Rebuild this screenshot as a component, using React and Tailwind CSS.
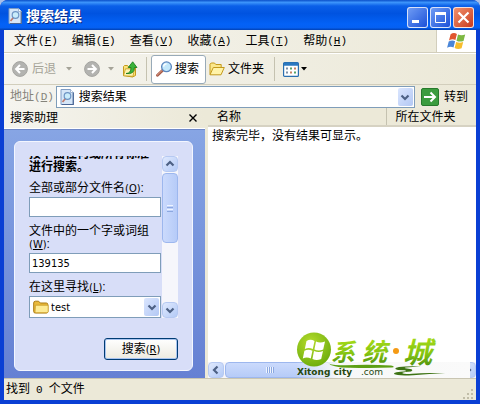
import React, { useState } from 'react';

const MENUS = [
  { label: '文件', accel: 'F' },
  { label: '编辑', accel: 'E' },
  { label: '查看', accel: 'V' },
  { label: '收藏', accel: 'A' },
  { label: '工具', accel: 'T' },
  { label: '帮助', accel: 'H' },
];

const Accel = ({ letter }) => (
  <span className="font-['Liberation_Mono',monospace] text-[11px]">
    (<u>{letter}</u>)
  </span>
);

const PanelAccel = ({ letter }) => (
  <span className="font-['DejaVu_Sans_Condensed','DejaVu_Sans',sans-serif] text-[11px]">
    (<u>{letter}</u>)
  </span>
);

const SearchPageIcon = ({ className }) => (
  <svg viewBox="0 0 14 16" className={className} aria-hidden="true">
    <path d="M1 .5h9.500l3 3v12H1z" fill="#d5e6f8" stroke="#7f9cc4" />
    <path d="M13.2 3.5v12H2" fill="none" stroke="#4a6594" strokeWidth="1.2" />
    <path d="M10.5.5v3h3" fill="#fff" stroke="#7f9cc4" strokeWidth=".7" />
    <path d="M5.5 9.5 2.5 13" stroke="#c07a6c" strokeWidth="1.8" />
    <circle cx="7.5" cy="7" r="3.3" fill="#c9ecfb" stroke="#6e95c4" strokeWidth="1.2" />
  </svg>
);

const FolderIcon = ({ className }) => (
  <svg viewBox="0 0 16 14" className={className} aria-hidden="true">
    <path d="M.7 3Q.7 1.2 2.4 1.2h3.2L7.3 3h6q1.5 0 1.5 1.5v7.2q0 1.3-1.4 1.3H2.2Q.7 13 .7 11.6z" fill="#e9b93a" stroke="#a97a12" />
    <path d="M2.4 5.2h12.8v6.3q0 1.2-1.3 1.2H3.2q-1.2 0-1.2-1.2z" fill="#fdeb94" stroke="#c99a26" strokeWidth=".8" />
  </svg>
);

const OpenFolderIcon = () => (
  <svg viewBox="0 0 16 14" className="h-3.5 w-4" aria-hidden="true">
    <path d="M1 12.5V2.2L2.2 1h3.3l1.3 1.5h5.4v3" fill="#fbe78a" stroke="#c49a1c" />
    <path d="m1 12.8 3.3-7.3h11L12 12.8z" fill="#fff3a8" stroke="#c49a1c" strokeLinejoin="round" />
  </svg>
);

const UpFolderIcon = () => (
  <svg viewBox="0 0 16 17" className="h-[17px] w-4" aria-hidden="true">
    <path d="M1.5 14.5v-9l1-1h3l1.2 1.5h6.8v8.5l-3 1.5z" fill="#fbe27a" stroke="#c49a1c" />
    <path d="m1.5 14.8 2-7H8l4.5-.5-1.5 8z" fill="#fff4b0" stroke="#c49a1c" strokeWidth=".8" />
    <path d="M4 12.5q5 0 5-6H6.2L10.7.8l4.3 5.7h-2.6q0 7.3-8.4 6z" fill="#3bb33a" stroke="#15781c" strokeWidth=".8" />
  </svg>
);

const MagnifierIcon = () => (
  <svg viewBox="0 0 17 16" className="h-4 w-[17px]" aria-hidden="true">
    <path d="m7.500 8.500-6 5.800" stroke="#a65a48" strokeWidth="2.8" strokeLinecap="round" />
    <path d="m7.300 8.200-6 5.800" stroke="#dda08a" strokeWidth="1" strokeLinecap="round" />
    <circle cx="10.5" cy="5.8" r="4.9" fill="#c3e8fb" stroke="#5c86be" strokeWidth="1.3" />
    <path d="M7.6 5.6a3 3 0 0 1 3-2.8" fill="none" stroke="#fff" strokeWidth="1.3" />
  </svg>
);

const RoundArrow = ({ flipped }) => (
  <svg viewBox="0 0 16 16" className={flipped ? 'size-4 rotate-180' : 'size-4'} aria-hidden="true">
    <circle cx="8" cy="8" r="7.4" fill="#b3b3b0" stroke="#a4a4a0" />
    <path d="M12.5 8H4.3M8 4 4.1 8 8 12" fill="none" stroke="#fff" strokeWidth="2" />
  </svg>
);

const ViewsIcon = () => (
  <svg viewBox="0 0 16 15" className="h-[15px] w-4" aria-hidden="true">
    <rect x=".6" y=".6" width="14.8" height="13.8" rx="1" fill="#fff" stroke="#2a6fb0" strokeWidth="1.2" />
    <path d="M1 2.2h14" stroke="#2b78c0" strokeWidth="3" />
    <path d="M3 6.500h2M3 10.600h2" stroke="#7c8fa8" strokeWidth="2" />
    <path d="M7 6.500h2M11 10.600h2" stroke="#58a36a" strokeWidth="2" />
    <path d="M11 6.500h2M7 10.600h2" stroke="#c98162" strokeWidth="2" />
  </svg>
);

const WindowsFlag = () => (
  <svg viewBox="0 0 20 18" className="h-[18px] w-5" aria-hidden="true">
    <path d="M3.6 2.3q3-2.2 6.3-.4L8.4 8q-3-1.5-6.4.4z" fill="#e0562f" />
    <path d="M11 2.5q3.3 1.6 7.2.1l-1.7 6.3q-3.7 1.5-7-.2z" fill="#7db843" />
    <path d="M1.7 9.6q3.3-2 6.4-.4l-1.6 6.2q-3-1.6-6.4.4z" fill="#4a86d8" />
    <path d="M9.2 9.9q3.3 1.6 7 .1l-1.6 6.3q-3.6 1.5-7-.2z" fill="#f6bd2c" />
  </svg>
);

const CHEVRONS = {
  up: 'm1.5 6.5 3.5-3.5 3.5 3.5',
  down: 'm1.5 3.5 3.5 3.5 3.5-3.5',
  left: 'M6.5 1.5 3 5l3.5 3.5',
  right: 'M3.5 1.5 7 5 3.5 8.5',
};

const Chevron = ({ dir }) => (
  <svg viewBox="0 0 10 10" className="size-2.5 shrink-0" aria-hidden="true">
    <path d={CHEVRONS[dir]} fill="none" stroke="#4d6185" strokeWidth="2.2" />
  </svg>
);

const Caret = ({ className }) => (
  <svg viewBox="0 0 6 4" className={className} aria-hidden="true">
    <path d="M0 0h6L3 3.5z" fill="currentColor" />
  </svg>
);

const ScrollButton = ({ dir, label }) => (
  <button
    type="button"
    aria-label={label}
    className="flex size-4 shrink-0 items-center justify-center rounded-sm border border-[#b6c9f2] bg-gradient-to-br from-[#dfe9fe] to-[#b4caf6]"
  >
    <Chevron dir={dir} />
  </button>
);

const ComboBox = ({ id, value, icon, className, selectClassName, ...rest }) => (
  <div className={`relative ${className}`}>
    <select
      id={id}
      defaultValue={value}
      className={`block h-[22px] w-full appearance-none border border-[#7f9db9] bg-white pr-5 text-black outline-none ${selectClassName}`}
      {...rest}
    >
      <option value={value}>{value}</option>
    </select>
    <span className="pointer-events-none absolute inset-y-0 left-1 flex items-center">{icon}</span>
    <span className="pointer-events-none absolute inset-y-0.5 right-0.5 flex w-[15px] items-center justify-center rounded-xs bg-gradient-to-br from-[#dbe6fe] to-[#b3c8f4]">
      <Chevron dir="down" />
    </span>
  </div>
);

const TitleBar = () => {
  const button = 'flex size-[21px] items-center justify-center rounded-[3px] border border-white/80';
  return (
    <header className="flex h-[30px] shrink-0 items-center gap-1 bg-[linear-gradient(180deg,#0a4fc9_0%,#3c94fb_8%,#0a5fe8_20%,#0053e0_45%,#0362f7_80%,#0560f2_92%,#0141b4_100%)] pt-0.5 pr-1.5 pl-2">
      <SearchPageIcon className="h-4 w-3.5" />
      <h1 className="flex-1 text-[14px] leading-4 font-bold text-white [text-shadow:1px_1px_0_#0a2a80]">搜索结果</h1>
      <div className="flex gap-0.5 pt-0.5">
        <button type="button" aria-label="最小化" className={`${button} bg-gradient-to-br from-[#6f9bf4] to-[#1c4fd8]`}>
          <svg viewBox="0 0 19 19" className="size-[19px]"><path d="M4 12h7v3H4z" fill="#fff" /></svg>
        </button>
        <button type="button" aria-label="最大化" className={`${button} bg-gradient-to-br from-[#6f9bf4] to-[#1c4fd8]`}>
          <svg viewBox="0 0 19 19" className="size-[19px]">
            <path d="M4.5 5.5h10v9h-10zM4 4.5h11" fill="none" stroke="#fff" />
            <path d="M4 5h11v2H4z" fill="#fff" />
          </svg>
        </button>
        <button type="button" aria-label="关闭" className={`${button} bg-gradient-to-br from-[#f0906c] to-[#c9381a]`}>
          <svg viewBox="0 0 19 19" className="size-[19px]"><path d="m4.5 4.5 10 10m0-10-10 10" stroke="#fff" strokeWidth="2.2" /></svg>
        </button>
      </div>
    </header>
  );
};

const MenuBar = () => (
  <nav className="flex h-[23px] shrink-0 border-b border-[#d2cebc] bg-gradient-to-r from-[#f5f4ef] to-[#ece9d8] pl-[3px]">
    {MENUS.map((menu) => (
      <button key={menu.accel} type="button" className="flex items-center px-[7px] whitespace-nowrap">
        {menu.label}
        <Accel letter={menu.accel} />
      </button>
    ))}
    <div className="ml-auto flex w-10 items-center justify-center border-l border-[#d2cebc] bg-white">
      <WindowsFlag />
    </div>
  </nav>
);

const Toolbar = () => (
  <div className="flex h-8 shrink-0 items-center border-t border-b border-t-white border-b-[#d2cebc] bg-gradient-to-r from-[#f5f4ef] to-[#ece9d8] pl-2 whitespace-nowrap">
    <button type="button" className="flex items-center gap-1 text-[#a5a398]">
      <RoundArrow />
      <span>后退</span>
      <Caret className="ml-1.5 h-1 w-1.5" />
    </button>
    <button type="button" aria-label="前进" className="ml-3 flex items-center gap-2 text-[#a5a398]">
      <RoundArrow flipped />
      <Caret className="h-1 w-1.5" />
    </button>
    <button type="button" aria-label="向上" className="ml-2">
      <UpFolderIcon />
    </button>
    <span className="ml-2 h-6 w-px bg-[#c5c2b0]" />
    <button type="button" className="ml-1 flex h-[29px] w-[55px] items-center gap-0.5 rounded-[3px] border border-[#98aab8] bg-white pl-1">
      <MagnifierIcon />
      <span>搜索</span>
    </button>
    <button type="button" className="ml-[3px] flex items-center gap-[3px]">
      <OpenFolderIcon />
      <span>文件夹</span>
    </button>
    <span className="ml-2.5 h-6 w-px bg-[#c5c2b0]" />
    <button type="button" aria-label="查看方式" className="ml-2 flex items-center gap-0.5">
      <ViewsIcon />
      <Caret className="h-1 w-1.5" />
    </button>
  </div>
);

const AddressBar = () => (
  <div className="flex h-[23px] shrink-0 items-center bg-gradient-to-r from-[#f5f4ef] to-[#ece9d8] pr-2 pl-1.5 whitespace-nowrap">
    <label htmlFor="address" className="text-[#85837a]">
      地址
      <Accel letter="D" />
    </label>
    <ComboBox
      id="address"
      value="搜索结果"
      icon={<SearchPageIcon className="h-4 w-3.5" />}
      className="ml-0.5 flex-1"
      selectClassName="pl-[22px]"
    />
    <button type="button" className="ml-1.5 flex items-center gap-[5px]">
      <svg viewBox="0 0 18 18" className="size-[18px]" aria-hidden="true">
        <rect x=".5" y=".5" width="17" height="17" rx="1.5" fill="#3b9c3e" stroke="#277a2c" />
        <path d="M3 9h11M9.5 4.5 14 9l-4.5 4.5" fill="none" stroke="#fff" strokeWidth="2" />
      </svg>
      <span>转到</span>
    </button>
  </div>
);

const SearchPanel = () => {
  const [fileName, setFileName] = useState('');
  const [phrase, setPhrase] = useState('139135');
  const field =
    "mt-0.5 block h-5 w-full border border-[#7f9db9] bg-white px-0.5 font-['DejaVu_Sans_Condensed','DejaVu_Sans',sans-serif] text-[11px] outline-none";

  return (
    <aside className="flex w-[201px] shrink-0 flex-col">
      <div className="flex h-[21px] items-center justify-between border-b border-white bg-gradient-to-r from-[#f5f4ef] to-[#ece9d8] pr-2 pl-1.5">
        <h2>搜索助理</h2>
        <button type="button" aria-label="关闭搜索助理">
          <svg viewBox="0 0 8 8" className="size-2"><path d="m.5.5 7 7m0-7-7 7" stroke="#000" strokeWidth="1.4" /></svg>
        </button>
      </div>
      <div className="flex flex-1 flex-col border-t border-[#6f88c8] bg-gradient-to-b from-[#87a5e4] to-[#6580d3] pt-[11px] pr-3 pb-[7px] pl-2.5">
        <form
          className="flex flex-1 flex-col rounded-md border border-[#f3f6ff] bg-[#d8def8] px-3.5 pt-3.5 pb-2.5"
          onSubmit={(e) => e.preventDefault()}
        >
          <div className="flex h-[162px] gap-px leading-[13px]">
            <div className="flex min-w-0 flex-1 flex-col justify-end gap-2 overflow-hidden">
              <p className="font-bold">
                按下面任何或所有标准
                <br />
                进行搜索。
              </p>
              <div>
                <label htmlFor="file-name" className="block">
                  全部或部分文件名
                  <PanelAccel letter="O" />:
                </label>
                <input id="file-name" className={field} value={fileName} onChange={(e) => setFileName(e.target.value)} />
              </div>
              <div>
                <label htmlFor="phrase" className="block">
                  文件中的一个字或词组
                  <br />
                  <PanelAccel letter="W" />:
                </label>
                <input id="phrase" className={field} value={phrase} onChange={(e) => setPhrase(e.target.value)} />
              </div>
              <div>
                <label htmlFor="look-in" className="block">
                  在这里寻找
                  <PanelAccel letter="L" />:
                </label>
                <ComboBox
                  id="look-in"
                  value="test"
                  icon={<FolderIcon className="h-3.5 w-4" />}
                  className="mt-0.5"
                  selectClassName="pl-[21px] font-['DejaVu_Sans_Condensed','DejaVu_Sans',sans-serif] text-[11px]"
                />
              </div>
            </div>
            <div className="flex w-4 flex-col gap-px bg-[#f6f6fb]">
              <ScrollButton dir="up" label="向上滚动" />
              <div className="flex h-[70px] flex-col items-center justify-center gap-px rounded-sm border border-[#9db7ee] bg-gradient-to-r from-[#cbdafc] to-[#b6cbf8]">
                <span className="h-px w-1.5 bg-[#eef4ff]" />
                <span className="h-px w-1.5 bg-[#8ca8e0]" />
                <span className="h-px w-1.5 bg-[#eef4ff]" />
                <span className="h-px w-1.5 bg-[#8ca8e0]" />
              </div>
              <div className="mt-auto">
                <ScrollButton dir="down" label="向下滚动" />
              </div>
            </div>
          </div>
          <button
            type="submit"
            className="mt-auto h-[22px] w-[74px] self-end rounded-[3px] border border-[#003c74] bg-gradient-to-b from-white to-[#eceae0] shadow-[inset_0_0_0_1px_#a9c4f0]"
          >
            搜索
            <PanelAccel letter="R" />
          </button>
        </form>
      </div>
    </aside>
  );
};

const Watermark = () => (
  <div className="pointer-events-none absolute right-1.5 bottom-0 flex h-[50px] w-[174px] items-end">
    <div className="absolute inset-x-0 bottom-0 h-4 bg-[linear-gradient(90deg,transparent,#f7f8f8_24%,#fafafa)]" />
    <svg viewBox="0 0 174 50" className="relative h-[50px] w-[174px]" role="img" aria-label="系统城">
      <defs>
        <linearGradient id="leaf" x1="0" y1="0" x2="0" y2="1">
          <stop offset="0" stopColor="#b4e41c" />
          <stop offset=".6" stopColor="#84c411" />
          <stop offset="1" stopColor="#3a7d0e" />
        </linearGradient>
        <radialGradient id="ball" cx=".4" cy=".3" r=".8">
          <stop offset="0" stopColor="#b5dc2c" />
          <stop offset="1" stopColor="#66a80a" />
        </radialGradient>
      </defs>
      <path d="M31 34q3 4 18 3.200 24-1 46 .2 5 1.200 1 2.200-20 .8-42 .2Q36 40 31 34" fill="#5c9f14" />
      <circle cx="18" cy="21.500" r="17" fill="url(#ball)" />
      <path d="M10.500 13q4-2.500 8 0l-1.700 8q-4-2-8 0zM20 13.500q4 2 9 0l-1.800 8q-4.500 2-8.800 0zM8.400 22.800q4-2 8 0l-1.600 7.700q-4-2-8 0zM18 23q4.500 2 9 0l-1.800 8q-4.500 2-8.800 0z" fill="#fff" />
      <g fill="url(#leaf)" fontFamily="'Noto Sans CJK SC', sans-serif" fontWeight="700" fontStyle="italic">
        <text x="35" y="33" fontSize="24">系</text>
        <text x="66" y="33" fontSize="25">统</text>
        <text x="107" y="35" fontSize="29">城</text>
      </g>
      <circle cx="100" cy="23" r="3" fill="#f59a14" />
      <path d="M125 38.500q-12-.8-22 .6-7 1.600-1 2.800 9 0 8 1.400-13 .8-12 2.700 3 2 19 1.200 18-1.800 33-1.700-18-1.200-34 .2-8 .8-10-.6 2-1.200 9-1.500 4-2.400-4-3-4-.6-1-1 6-.8 15-1.100z" fill="#3d7314" />
      <g fill="#26480f" fontFamily="'DejaVu Sans', sans-serif" fontSize="9">
        <text x="1" y="47" fontWeight="700">Xitong city</text>
        <text x="65" y="47">.com</text>
      </g>
    </svg>
  </div>
);

const ResultsPane = () => (
  <main className="relative flex min-w-0 flex-1 flex-col bg-white">
    <table className="w-full table-fixed border-collapse text-left">
      <thead>
        <tr className="h-[18px] border-b-2 border-[#d6d2c2] bg-[#ece9d8] leading-4">
          <th className="pl-[9px] font-normal">名称</th>
          <th className="w-[90px] border-l border-[#c5c2b0] pl-[9px] font-normal">所在文件夹</th>
        </tr>
      </thead>
      <tbody>
        <tr>
          <td colSpan={2} className="pl-1 leading-[18px]">搜索完毕，没有结果可显示。</td>
        </tr>
      </tbody>
    </table>
    <div className="mt-auto flex h-4 gap-px bg-[#f6f6fb]">
      <ScrollButton dir="left" label="向左滚动" />
      <div className="flex flex-1 items-center rounded-sm border border-[#9db7ee] bg-gradient-to-b from-[#cbdafc] to-[#b6cbf8] pl-10">
        <span className="h-1.5 w-2 bg-[repeating-linear-gradient(90deg,#eef4ff_0_1px,#8ca8e0_1px_2px)]" />
      </div>
      <ScrollButton dir="right" label="向右滚动" />
    </div>
    <Watermark />
  </main>
);

const App = () => {
  return (
    <div className="bg-[#a9bfe8] font-['Liberation_Sans','Noto_Sans_CJK_SC',sans-serif] text-[12px] leading-4 text-black">
      <div className="flex min-h-screen flex-col overflow-hidden rounded-t-lg bg-[#0a3fd4]">
        <TitleBar />
        <div className="mx-1 mb-1 flex flex-1 flex-col bg-[#ece9d8]">
          <MenuBar />
          <Toolbar />
          <AddressBar />
          <div className="flex flex-1">
            <SearchPanel />
            <div className="w-[3px] shrink-0 bg-[#ece9d8]" />
            <ResultsPane />
          </div>
          <footer className="flex h-[22px] shrink-0 items-center justify-between border-t border-[#c9c5b2] pr-0.5 pl-0.5">
            <span>
              找到<span className="px-1.5 font-['Liberation_Mono',monospace] text-[11px]">0</span>个文件
            </span>
            <svg viewBox="0 0 12 12" className="size-3 self-end" aria-hidden="true">
              <path d="M9 1h2v2H9zM9 5h2v2H9zM5 5h2v2H5zM9 9h2v2H9zM5 9h2v2H5zM1 9h2v2H1z" fill="#c1bda8" />
            </svg>
          </footer>
        </div>
      </div>
    </div>
  );
};

export default App;
